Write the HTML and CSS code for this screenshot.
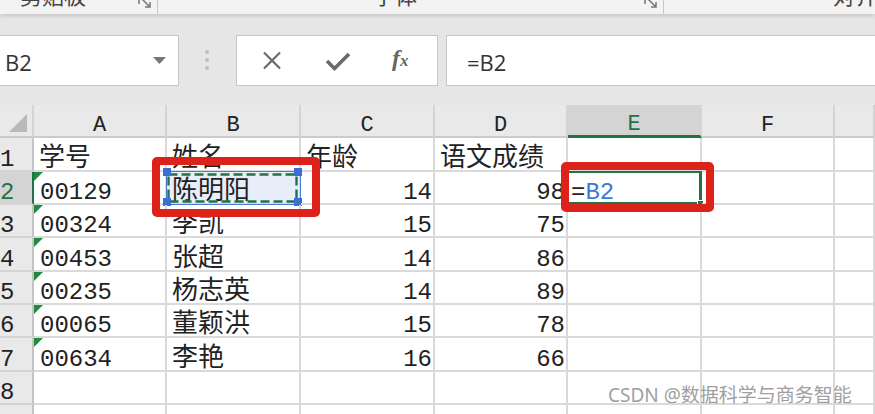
FILE: index.html
```html
<!DOCTYPE html>
<html lang="zh-CN">
<head>
    <meta charset="UTF-8">
    <meta name="viewport" content="width=device-width, initial-scale=1.0">
    <title>单元格引用</title>
    <link rel="stylesheet" href="styles.css">
</head>
<body>
    <div class="ribbon">
        <span class="group-label clip-label">剪贴板</span>
        <svg class="launcher launcher-clip" width="16" height="16" viewBox="0 0 16 16"><path d="M2 2V10M2 2H10M5 5L13 13M13 8V13H8" fill="none" stroke="#777" stroke-width="1.5"/></svg>
        <span class="ribbon-sep"></span>
        <span class="group-label font-label">字体</span>
        <svg class="launcher launcher-font" width="16" height="16" viewBox="0 0 16 16"><path d="M2 2V10M2 2H10M5 5L13 13M13 8V13H8" fill="none" stroke="#777" stroke-width="1.5"/></svg>
        <span class="ribbon-sep"></span>
        <span class="group-label align-label">对齐方式</span>
    </div>

    <div class="formula-row">
        <div class="name-box">
            <span>B2</span>
            <svg class="dropdown" width="13" height="7" viewBox="0 0 13 7"><path d="M0 0H13L6.5 7Z" fill="#777"/></svg>
        </div>
        <div class="grip"><i></i><i></i><i></i></div>
        <div class="fx-tools">
            <svg class="tool-cancel" width="20" height="19" viewBox="0 0 20 19"><path d="M2 1.5L18 17.5M18 1.5L2 17.5" stroke="#6a6a6a" stroke-width="2.2"/></svg>
            <svg class="tool-ok" width="26" height="20" viewBox="0 0 26 20"><path d="M2 10L9.5 17.5L24 3" fill="none" stroke="#6a6a6a" stroke-width="3.6"/></svg>
            <span class="tool-fx">f<span class="fx-x">x</span></span>
        </div>
        <div class="formula-input">=B2</div>
    </div>

    <div class="sheet-wrap">
        <div class="sheet">
            <div class="hd corner"><svg width="18" height="18" viewBox="0 0 18 18"><path d="M18 0V18H0Z" fill="#b9b9b9"/></svg></div>
            <div class="hd col-hd">A</div>
            <div class="hd col-hd">B</div>
            <div class="hd col-hd">C</div>
            <div class="hd col-hd">D</div>
            <div class="hd col-hd on">E</div>
            <div class="hd col-hd">F</div>
            <div class="hd col-hd"></div>

            <div class="hd row-hd">1</div>
            <div class="cell zh">学号</div>
            <div class="cell zh">姓名</div>
            <div class="cell zh">年龄</div>
            <div class="cell zh">语文成绩</div>
            <div class="cell"></div>
            <div class="cell"></div>
            <div class="cell"></div>

            <div class="hd row-hd on">2</div>
            <div class="cell flag">00129</div>
            <div class="cell zh copied">
                陈明阳
                <svg class="ants" width="131" height="30" viewBox="0 0 131 30"><rect x="1.5" y="1.5" width="128" height="27" fill="none" stroke="#217346" stroke-width="2.4" stroke-dasharray="9 4"/></svg>
                <span class="ref-box"></span>
                <span class="handle tl"></span>
                <span class="handle tr"></span>
                <span class="handle bl"></span>
                <span class="handle br"></span>
            </div>
            <div class="cell num">14</div>
            <div class="cell num">98</div>
            <div class="cell active">=<span class="ref">B2</span><span class="active-box"></span><span class="fill-handle"></span></div>
            <div class="cell"></div>
            <div class="cell"></div>

            <div class="hd row-hd">3</div>
            <div class="cell flag">00324</div>
            <div class="cell zh">李凯</div>
            <div class="cell num">15</div>
            <div class="cell num">75</div>
            <div class="cell"></div>
            <div class="cell"></div>
            <div class="cell"></div>

            <div class="hd row-hd">4</div>
            <div class="cell flag">00453</div>
            <div class="cell zh">张超</div>
            <div class="cell num">14</div>
            <div class="cell num">86</div>
            <div class="cell"></div>
            <div class="cell"></div>
            <div class="cell"></div>

            <div class="hd row-hd">5</div>
            <div class="cell flag">00235</div>
            <div class="cell zh">杨志英</div>
            <div class="cell num">14</div>
            <div class="cell num">89</div>
            <div class="cell"></div>
            <div class="cell"></div>
            <div class="cell"></div>

            <div class="hd row-hd">6</div>
            <div class="cell flag">00065</div>
            <div class="cell zh">董颖洪</div>
            <div class="cell num">15</div>
            <div class="cell num">78</div>
            <div class="cell"></div>
            <div class="cell"></div>
            <div class="cell"></div>

            <div class="hd row-hd">7</div>
            <div class="cell flag">00634</div>
            <div class="cell zh">李艳</div>
            <div class="cell num">16</div>
            <div class="cell num">66</div>
            <div class="cell"></div>
            <div class="cell"></div>
            <div class="cell"></div>

            <div class="hd row-hd">8</div>
            <div class="cell"></div>
            <div class="cell"></div>
            <div class="cell"></div>
            <div class="cell"></div>
            <div class="cell"></div>
            <div class="cell"></div>
            <div class="cell"></div>

            <div class="hd row-hd"></div>
            <div class="cell"></div>
            <div class="cell"></div>
            <div class="cell"></div>
            <div class="cell"></div>
            <div class="cell"></div>
            <div class="cell"></div>
            <div class="cell"></div>
        </div>

        <div class="mark mark-b2"></div>
        <div class="mark mark-e2"></div>
        <div class="watermark">CSDN @数据科学与商务智能</div>
    </div>
</body>
</html>
```

FILE: styles.css
```css
html, body {
    margin: 0;
    padding: 0;
}
body {
    width: 875px;
    height: 414px;
    overflow: hidden;
    background: #e6e6e6;
    font-family: "Open Sans", "Noto Sans CJK SC", sans-serif;
    color: #222;
}

/* ribbon group labels, mostly scrolled off the top */
.ribbon {
    position: relative;
    height: 14px;
    display: flex;
    align-items: flex-start;
    overflow: hidden;
    background: #f3f3f3;
    box-shadow: 0 2px 4px rgba(0, 0, 0, 0.14);
}
.group-label {
    font-family: "Noto Sans CJK SC", sans-serif;
    font-size: 22px;
    line-height: 22px;
    margin-top: -17px;
    color: #444;
    white-space: nowrap;
}
.clip-label {
    margin-left: 20px;
}
.launcher {
    flex: none;
    margin-top: -6px;
}
.launcher-clip {
    margin-left: 51px;
}
.launcher-font {
    margin-left: 226px;
}
.ribbon-sep {
    flex: none;
    width: 1px;
    height: 14px;
    margin-left: 4px;
    background: #c8c8c8;
}
.font-label {
    margin-left: 215px;
}
.align-label {
    margin-left: 169px;
}

/* name box + formula bar */
.formula-row {
    height: 70px;
    padding-top: 21px;
    display: flex;
    align-items: flex-start;
}
.name-box {
    flex: none;
    box-sizing: border-box;
    width: 183px;
    height: 51px;
    margin-left: -4px;
    padding: 3px 12px 0 8px;
    display: flex;
    align-items: center;
    background: #fff;
    border: 1px solid #c6c6c6;
    font-size: 22px;
    color: #333;
}
.name-box .dropdown {
    margin-left: auto;
    margin-top: -4px;
}
.grip {
    flex: none;
    margin: 15px 0 0 26px;
    display: flex;
    flex-direction: column;
    gap: 4px;
}
.grip i {
    width: 4px;
    height: 4px;
    border-radius: 50%;
    background: #bdbdbd;
}
.fx-tools {
    flex: none;
    box-sizing: border-box;
    width: 202px;
    height: 51px;
    margin-left: 27px;
    padding-left: 25px;
    display: flex;
    align-items: center;
    background: #fff;
    border: 1px solid #c6c6c6;
}
.tool-ok {
    margin-left: 43px;
}
.tool-fx {
    margin-left: 41px;
    font-family: "Liberation Serif", serif;
    font-style: italic;
    font-weight: bold;
    font-size: 24px;
    color: #666;
    margin-top: -4px;
}
.fx-x {
    font-size: 17px;
}
.formula-input {
    flex: 1;
    box-sizing: border-box;
    height: 51px;
    margin: 0 -10px 0 8px;
    padding: 3px 0 0 20px;
    display: flex;
    align-items: center;
    background: #fff;
    border: 1px solid #c6c6c6;
    font-size: 22px;
    color: #333;
}

/* worksheet grid */
.sheet-wrap {
    position: relative;
}
.sheet {
    display: grid;
    grid-template-columns: 34px 133px 134px 134px 133px 134px 133px 1fr;
    grid-template-rows: 33px 34px 33px 33px 34px 33px 33px 34px 33px 20px;
    background: #fff;
    font-family: "Liberation Mono", "Noto Sans CJK SC", monospace;
    font-size: 24px;
}
.hd {
    box-sizing: border-box;
    display: flex;
    align-items: flex-end;
    line-height: 21px;
    background: #e9e9e9;
    border-right: 2px solid #d4d4d4;
    border-bottom: 2px solid #cbcbcb;
    color: #222;
}
.corner {
    align-items: flex-end;
    justify-content: flex-end;
    padding: 0 5px 4px 0;
}
.col-hd {
    justify-content: center;
    font-size: 22px;
}
.row-hd {
    border-right-color: #c4c4c4;
    border-bottom-color: #d4d4d4;
}
.hd.on {
    background: #d4d4d4;
    color: #217346;
}
.col-hd.on {
    border-bottom: 3px solid #217346;
}
.row-hd.on {
    border-right: 2px solid #217346;
}
.cell {
    position: relative;
    box-sizing: border-box;
    display: flex;
    align-items: flex-end;
    padding: 0 1px 0 6px;
    line-height: 21px;
    white-space: nowrap;
    border-right: 2px solid #dadada;
    border-bottom: 2px solid #dadada;
}
.cell.zh {
    font-size: 26px;
    padding-left: 5px;
}
.cell.num {
    justify-content: flex-end;
}
.flag::before {
    content: "";
    position: absolute;
    top: 0;
    left: 0;
    border-top: 9px solid #1f8b3f;
    border-right: 9px solid transparent;
}

/* copied / referenced cell B2 */
.copied {
    background: #e8eef9;
}
.ants {
    position: absolute;
    left: 0;
    top: 1px;
}
.ref-box {
    position: absolute;
    top: -1px;
    left: -1px;
    right: -2px;
    bottom: -2px;
    border: 1px solid #4a7bd2;
}
.handle {
    position: absolute;
    width: 8px;
    height: 8px;
    background: #3b6fd1;
}
.handle.tl { top: -4px; left: -4px; }
.handle.tr { top: -4px; right: -3px; }
.handle.bl { bottom: -3px; left: -4px; }
.handle.br { bottom: -3px; right: -3px; }

/* active cell E2 */
.active {
    padding-left: 3px;
}
.ref {
    color: #3d78d6;
}
.active-box {
    position: absolute;
    top: -1px;
    left: -2px;
    right: -2px;
    bottom: -1px;
    border: 2px solid #217346;
    border-right-width: 3px;
}
.fill-handle {
    position: absolute;
    right: -4px;
    bottom: -4px;
    width: 5px;
    height: 5px;
    background: #217346;
    border: 1px solid #fff;
}

/* red annotation frames */
.mark {
    position: absolute;
    box-sizing: border-box;
    border: 8px solid #dc2219;
    border-radius: 5px;
}
.mark-b2 {
    left: 152px;
    top: 52px;
    width: 168px;
    height: 60px;
}
.mark-e2 {
    left: 561px;
    top: 57px;
    width: 153px;
    height: 50px;
}
.watermark {
    position: absolute;
    left: 608px;
    top: 279px;
    font-family: "Noto Sans", "Noto Sans CJK SC", sans-serif;
    font-size: 19px;
    line-height: 22px;
    color: #a0a0a0;
    text-shadow: 0 0 1px #fff;
    white-space: nowrap;
}
```
